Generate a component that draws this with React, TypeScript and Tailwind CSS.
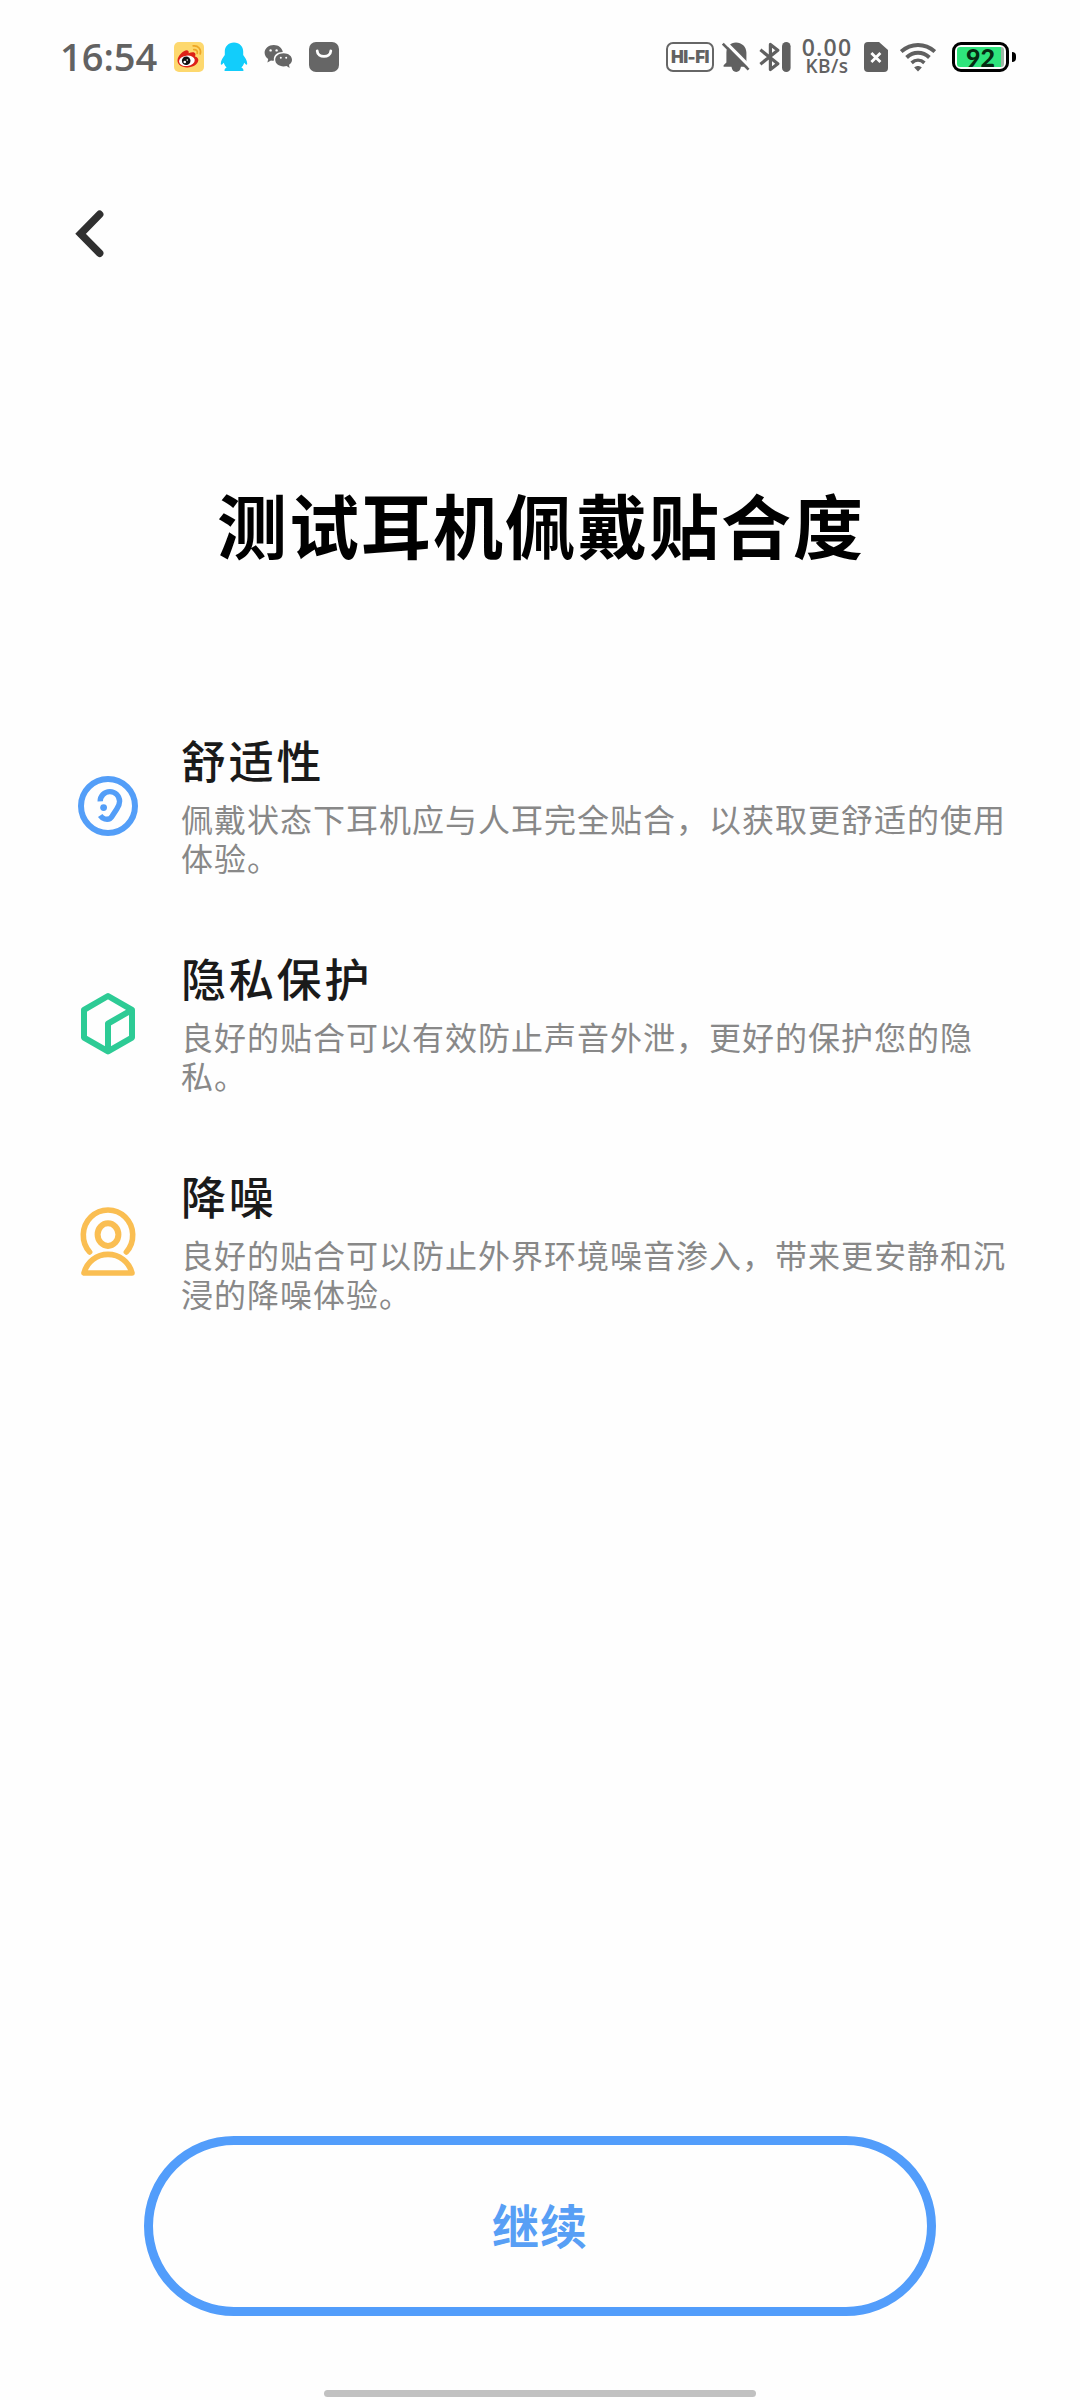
import type { ReactNode } from "react";

// Feature icons
function EarIcon() {
  return (
    <svg width="60" height="60" viewBox="0 0 60 60" fill="none" stroke="#539ef8">
      <circle cx="30" cy="30" r="27" strokeWidth="6" />
      <path
        d="M22.2 25.4A9.7 9.7 0 0 1 41.6 25.2C41.6 28.2 40.6 30.2 38.8 33L34.4 39.8C32.6 42.8 29.6 43.8 26.8 43C24.8 42.4 23.4 41.4 22.2 39.6"
        strokeWidth="5.4"
      />
      <circle cx="25.6" cy="31.6" r="3.4" fill="#539ef8" stroke="none" />
    </svg>
  );
}

function CubeIcon() {
  return (
    <svg
      width="60"
      height="68"
      viewBox="0 0 60 68"
      fill="none"
      stroke="#2dcb95"
      strokeWidth="6"
      strokeLinejoin="round"
    >
      <path d="M30 6L54 19.8V47.6L30 61.4L6 47.6V19.8Z" />
      <path d="M54 19.8L30 33.6V61" />
    </svg>
  );
}

function NoiseIcon() {
  return (
    <svg
      width="60"
      height="70"
      viewBox="0 0 60 70"
      fill="none"
      stroke="#fabe52"
      strokeWidth="5.6"
      strokeLinejoin="round"
      strokeLinecap="round"
    >
      <path d="M11.6 45A24.7 25.2 0 1 1 48.4 45" />
      <ellipse cx="30" cy="27.6" rx="10.4" ry="11.3" strokeWidth="6" />
      <path d="M6 66H54C51 54.6 41.4 47.4 30 47.4S9 54.6 6 66Z" />
    </svg>
  );
}

// Status bar icons
function WeiboIcon() {
  return (
    <svg width="30" height="30" viewBox="0 0 30 30">
      <rect width="30" height="30" rx="5" fill="#fdd86e" />
      <path
        d="M3.5 18.5C3.5 14 9.5 8 13 8.2C14.8 8.4 15 10 14.6 11.2C17.4 10 21 9.6 21.4 12C21.6 13.2 21 14 21 14.4C23.2 15 24.6 16.4 24.3 18.6C23.6 22.8 18.5 25.6 13 25.4C7.6 25.2 3.5 22.6 3.5 18.5Z"
        fill="#dd2118"
      />
      <ellipse cx="12.9" cy="18.8" rx="7.9" ry="5.2" fill="#fff" transform="rotate(-7 12.9 18.8)" />
      <circle cx="12.2" cy="18.8" r="4.3" fill="#111" />
      <circle cx="10.8" cy="20" r="1.3" fill="#fff" />
      <circle cx="13.3" cy="18" r="0.8" fill="#fff" />
      <path
        d="M19.2 3.9C24.2 3.2 27.6 7.4 26.2 12M19.8 7.6C22.4 7.4 23.8 9 23.2 11.4"
        fill="none"
        stroke="#eda626"
        strokeWidth="1.7"
        strokeLinecap="round"
      />
    </svg>
  );
}

function QQIcon() {
  return (
    <svg width="28" height="30" viewBox="0 0 28 30" fill="#12cdfb">
      <path d="M14 0.6C8.4 0.6 4.8 4.6 4.8 9.6V13C3 15.6 0.8 18.6 0.8 21.4C0.8 23.4 1.8 23.2 3.8 20.8C4.4 22.8 5.4 24.4 6.6 25.4C4.8 26.2 4.4 27.2 4.6 29H23.4C23.6 27.2 23.2 26.2 21.4 25.4C22.6 24.4 23.6 22.8 24.2 20.8C26.2 23.2 27.2 23.4 27.2 21.4C27.2 18.6 25 15.6 23.2 13V9.6C23.2 4.6 19.6 0.6 14 0.6Z" />
    </svg>
  );
}

function WeChatIcon() {
  return (
    <svg width="29" height="26" viewBox="0 0 29 26" fill="#666">
      <path d="M9.8 1C4.6 1 0.6 4.4 0.6 8.8C0.6 11.4 2 13.6 4.2 15L3.4 18.6L7 16.4C8 16.6 9 16.7 10 16.6C9 11.4 13.4 8 18.8 8C18.2 3.8 14.4 1 9.8 1Z" />
      <path d="M19.6 9.2C14.8 9.2 11.2 12 11.2 15.8C11.2 19.6 14.8 22.4 19.6 22.4C20.6 22.4 21.6 22.3 22.6 22L25.6 24L25 20.8C27 19.6 28 17.8 28 15.8C28 12 24.4 9.2 19.6 9.2Z" />
      <g fill="#fff">
        <circle cx="6.6" cy="6.4" r="1.2" />
        <circle cx="12.6" cy="6.4" r="1.2" />
        <circle cx="16.8" cy="13.8" r="1" />
        <circle cx="22.2" cy="13.8" r="1" />
      </g>
    </svg>
  );
}

function BagIcon() {
  return (
    <svg width="30" height="30" viewBox="0 0 30 30">
      <rect width="30" height="30" rx="7" fill="#666" />
      <path d="M8.2 9C8.6 16.2 21.4 16.2 21.8 9" fill="none" stroke="#fff" strokeWidth="2.8" strokeLinecap="round" />
    </svg>
  );
}

function BellOffIcon() {
  return (
    <svg width="28" height="30" viewBox="0 0 28 30">
      <path
        d="M14 0.4C19.6 0.4 24.4 4.6 24.4 10.6V20.4L26.4 24.8H1.6V23.2L4.4 20.4V10.6C4.4 4.6 8.4 0.4 14 0.4ZM9.4 24.6H19C18.4 28.4 16.6 30 14.2 30S10 28.4 9.4 24.6Z"
        fill="#606060"
      />
      <path d="M2.6 -0.6L29.4 26.2" stroke="#fefefe" strokeWidth="3.4" />
      <path d="M0.8 1.6L26.6 27.6" stroke="#606060" strokeWidth="2.6" />
    </svg>
  );
}

function BluetoothIcon() {
  return (
    <svg width="32" height="30" viewBox="0 0 32 30" fill="none">
      <path
        d="M1.4 7.8L18.8 21.8L11.4 27.6V2.4L18.8 8.2L1.4 22.2"
        stroke="#606060"
        strokeWidth="3.2"
        strokeLinejoin="round"
      />
      <rect x="23" width="8.6" height="30" rx="4.3" fill="#606060" />
    </svg>
  );
}

function SimIcon() {
  return (
    <svg width="24" height="30" viewBox="0 0 24 30">
      <path d="M4 0H15L24 8V26A4 4 0 0 1 20 30H4A4 4 0 0 1 0 26V4A4 4 0 0 1 4 0Z" fill="#606060" />
      <path d="M7.4 11L16.4 20M16.4 11L7.4 20" stroke="#fff" strokeWidth="2.8" />
    </svg>
  );
}

function WifiIcon() {
  return (
    <svg width="36" height="30" viewBox="0 0 36 30" fill="none" stroke="#606060" strokeWidth="4">
      <path d="M1.2 9.6C11 0.8 25 0.8 34.8 9.6" />
      <path d="M6.6 15.4C13.4 9.2 22.6 9.2 29.4 15.4" />
      <path d="M11.6 20.8C15.4 17.4 20.6 17.4 24.4 20.8" strokeWidth="3.6" />
      <path d="M14.2 25.6C16.4 23.6 19.6 23.6 21.8 25.6L18 29.6Z" fill="#606060" stroke="none" />
    </svg>
  );
}

function Battery({ level }: { level: number }) {
  return (
    <div className="ml-[16px] flex items-center gap-[3px]">
      <div className="flex h-[30px] w-[57px] rounded-[9px] border-[3px] border-black p-[2px]">
        <div className="flex h-full w-full items-center justify-center rounded-[3px] bg-[linear-gradient(90deg,#2fe57c_93%,#9fb5a6_93%)]">
          <span className="font-['Lato'] text-[25px] leading-none font-black text-[#062b12]">{level}</span>
        </div>
      </div>
      <div className="h-[10px] w-[4px] rounded-r-full bg-black" />
    </div>
  );
}

function StatusBar() {
  return (
    <div className="flex h-[114px] items-center pl-[60px] font-['Open_Sans','Noto_Sans_CJK_SC',sans-serif] text-[#626262]">
      <span className="mb-[2px] w-[114px] text-[38px] leading-none font-semibold">16:54</span>
      <WeiboIcon />
      <div className="ml-[16px]">
        <QQIcon />
      </div>
      <div className="ml-[16px]">
        <WeChatIcon />
      </div>
      <div className="ml-[16px]">
        <BagIcon />
      </div>

      <div className="ml-[327px] flex h-[30px] w-[48px] items-center justify-center rounded-[7px] border-2 border-[#666]">
        <span className="font-['Inter'] text-[17px] leading-none font-black tracking-[-0.5px] whitespace-nowrap">
          HI-FI
        </span>
      </div>
      <div className="ml-[8px]">
        <BellOffIcon />
      </div>
      <div className="ml-[9px]">
        <BluetoothIcon />
      </div>
      <div className="ml-[9px] flex w-[54px] flex-col items-center font-semibold">
        <span className="text-[23px] leading-[19px] tracking-[1.2px]">0.00</span>
        <span className="text-[19px] leading-[19px] tracking-[0.4px]">KB/s</span>
      </div>
      <div className="ml-[10px]">
        <SimIcon />
      </div>
      <div className="ml-[12px]">
        <WifiIcon />
      </div>
      <Battery level={92} />
    </div>
  );
}

type Feature = {
  id: string;
  title: string;
  description: string;
  icon: ReactNode;
};

const features: Feature[] = [
  {
    id: "comfort",
    title: "舒适性",
    description: "佩戴状态下耳机应与人耳完全贴合，以获取更舒适的使用体验。",
    icon: <EarIcon />,
  },
  {
    id: "privacy",
    title: "隐私保护",
    description: "良好的贴合可以有效防止声音外泄，更好的保护您的隐私。",
    icon: <CubeIcon />,
  },
  {
    id: "noise",
    title: "降噪",
    description: "良好的贴合可以防止外界环境噪音渗入，带来更安静和沉浸的降噪体验。",
    icon: <NoiseIcon />,
  },
];

export default function App() {
  return (
    <div
      lang="zh-CN"
      className="flex h-[2400px] w-[1080px] flex-col overflow-hidden bg-[#fefefe] font-['Noto_Sans_CJK_SC',sans-serif]"
    >
      <StatusBar />

      {/* Back */}
      <div className="flex h-[240px] items-center pl-[75px]">
        <button type="button" aria-label="返回">
          <svg width="30" height="50" viewBox="0 0 30 50" fill="none" stroke="#303030" strokeWidth="7.6">
            <path d="M24.6 5.4L5.6 24.8L24.6 44.2" strokeLinecap="round" />
          </svg>
        </button>
      </div>

      {/* Title */}
      <h1 className="mt-[118px] pl-[2px] text-center text-[70px] leading-[104px] font-bold tracking-[2px] text-black">
        测试耳机佩戴贴合度
      </h1>

      {/* Features */}
      <div className="mt-[157px] flex flex-col gap-[72px] pr-[70px] pl-[78px]">
        {features.map((feature) => (
          <div key={feature.id} className="flex items-center gap-[43px]">
            <div className="shrink-0">{feature.icon}</div>
            <div className="-mt-[2px] mb-[2px]">
              <h2 className="mb-[10px] text-[45px] leading-[58px] font-medium tracking-[2.8px] text-[#1a1a1a]">
                {feature.title}
              </h2>
              <p className="text-[32px] leading-[39px] tracking-[1px] text-[#888]">{feature.description}</p>
            </div>
          </div>
        ))}
      </div>

      {/* Continue */}
      <div className="mt-auto flex flex-col items-center pb-[3px]">
        <button
          type="button"
          className="h-[180px] w-[792px] rounded-full border-[9px] border-[#529dfb] pb-[3px] text-[47px] font-bold tracking-[1px] text-[#589ff5]"
        >
          继续
        </button>
        <div className="mt-[74px] h-[7px] w-[432px] rounded-full bg-[#c1c1c1]" />
      </div>
    </div>
  );
}
